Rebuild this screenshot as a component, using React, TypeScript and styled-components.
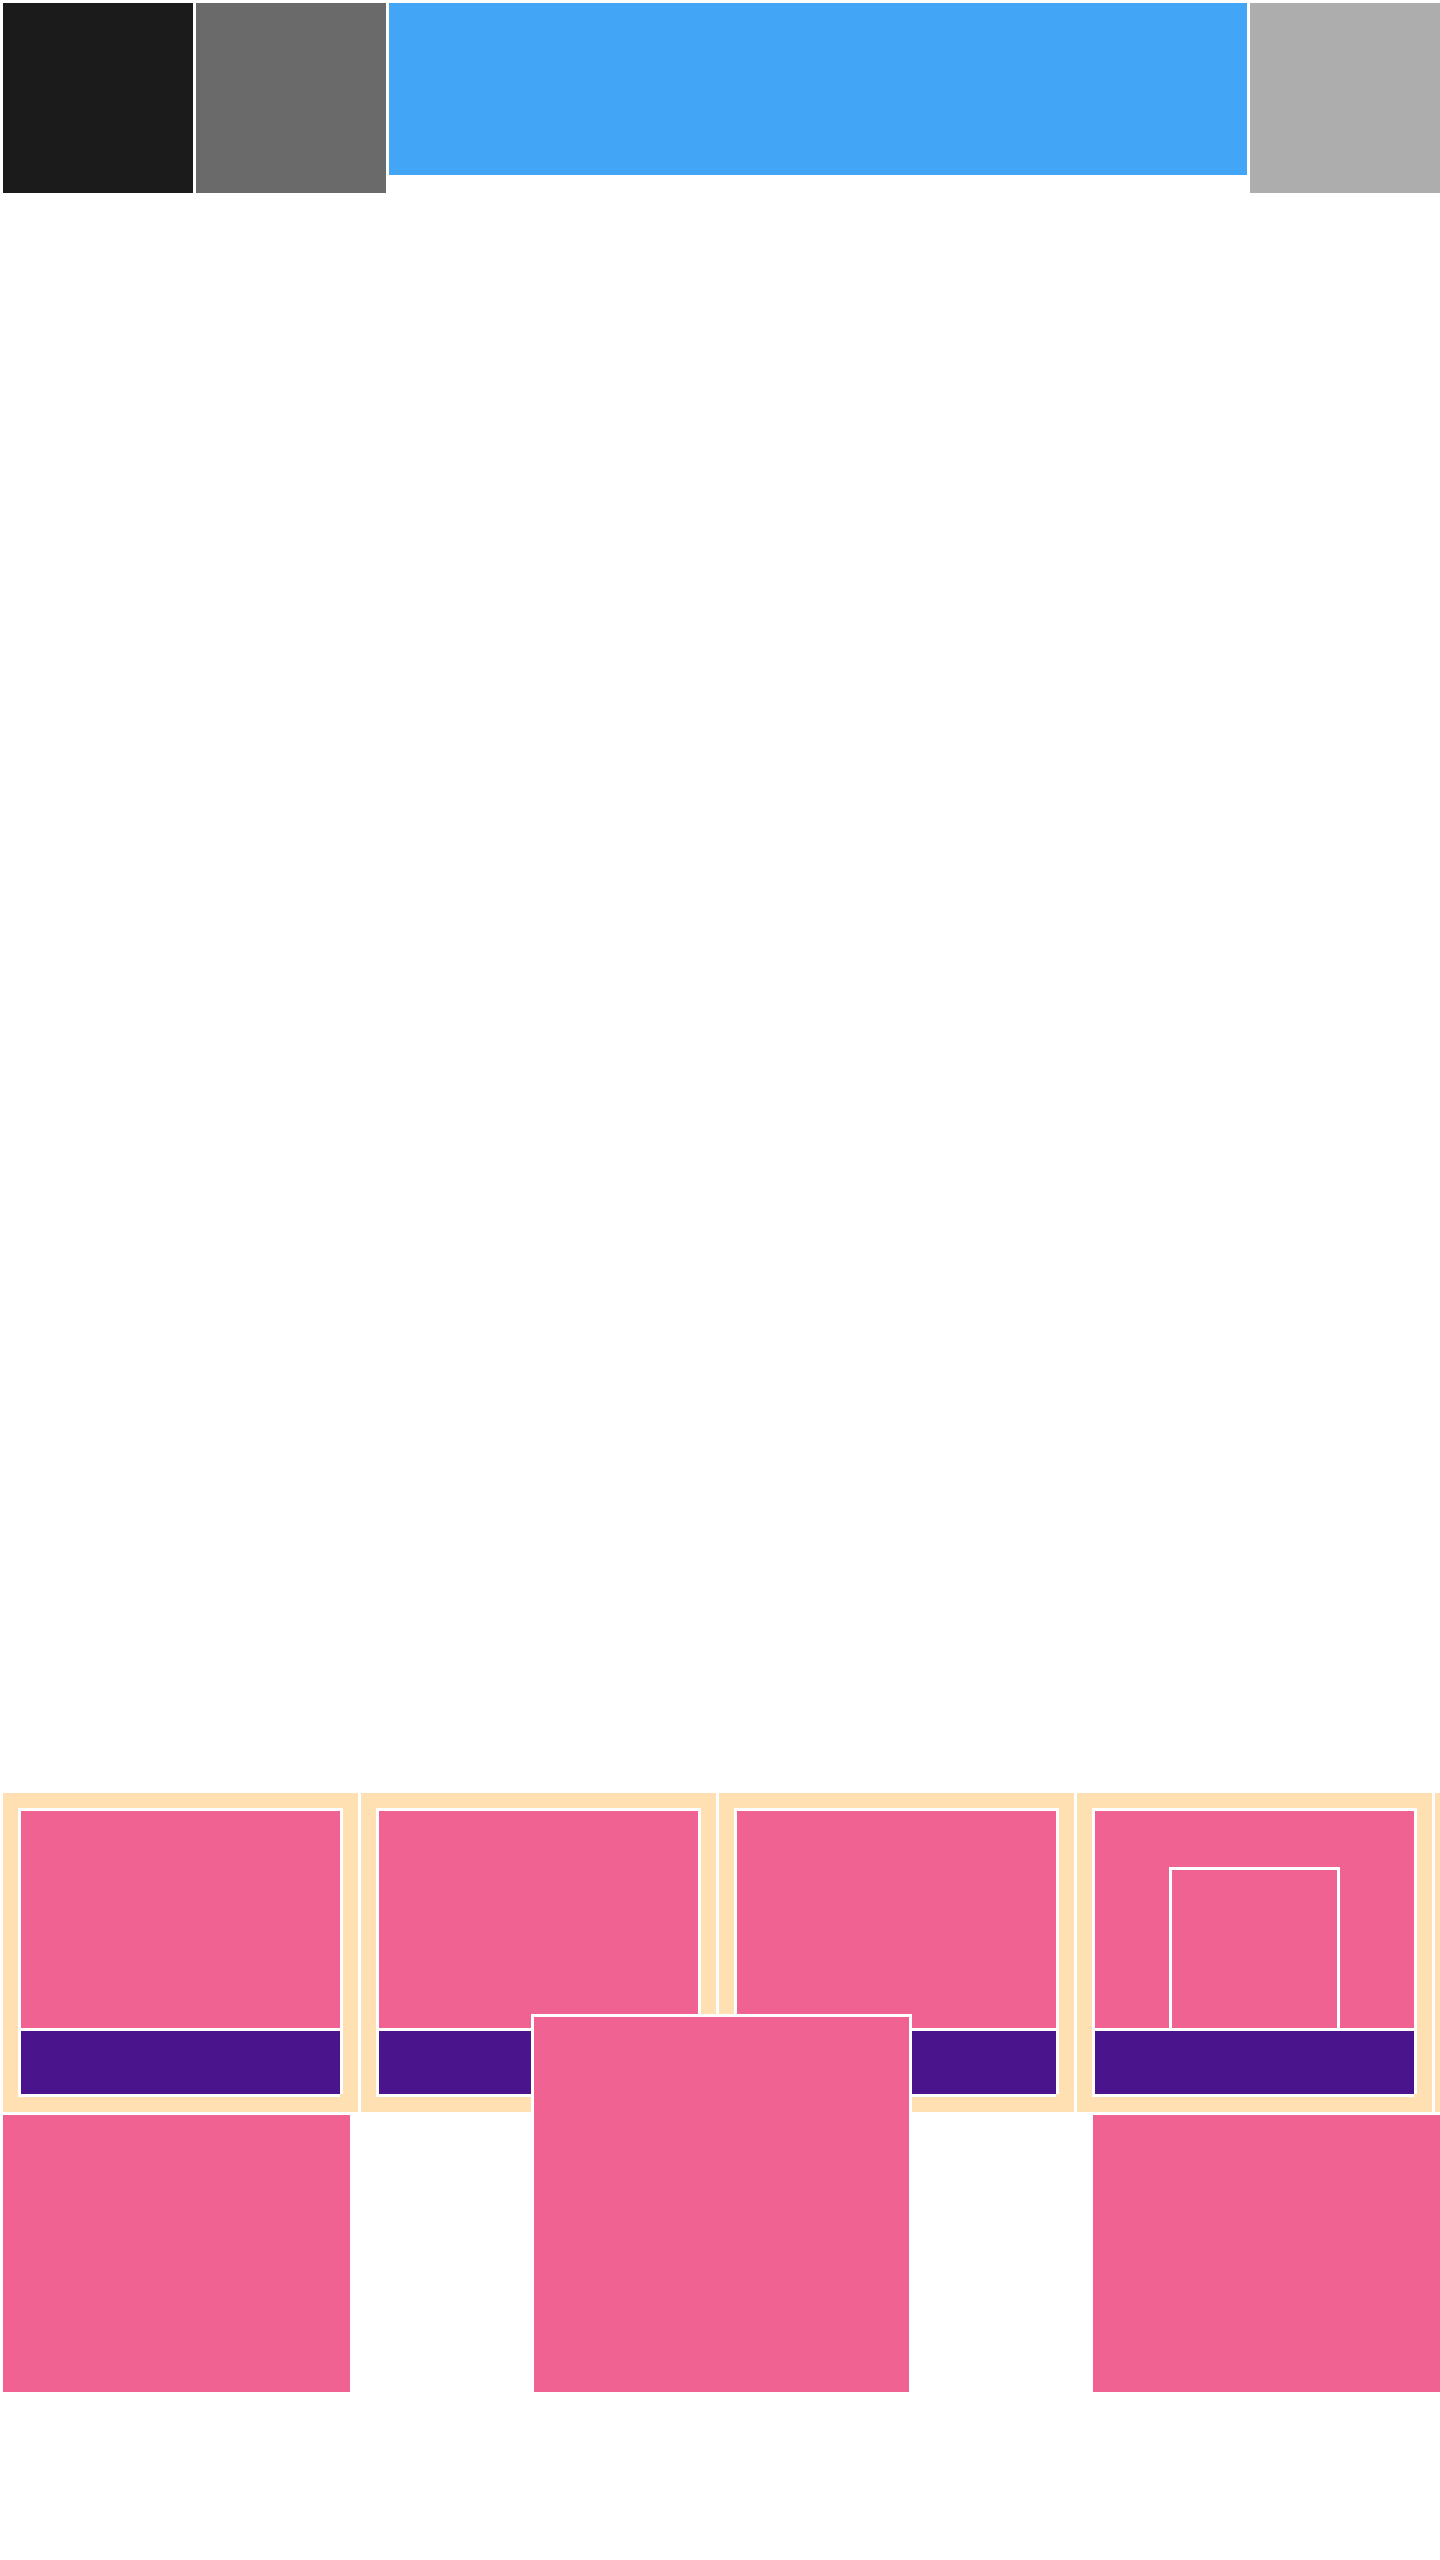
import styled, { createGlobalStyle } from "styled-components";

const GlobalStyle = createGlobalStyle`
  html, body {
    margin: 0;
    padding: 0;
    background: #fff;
    font-family: "Liberation Sans", Arial, sans-serif;
  }
`;

const Page = styled.div`
  width: 1440px;
  display: flex;
  flex-direction: column;
  gap: 3px;
  padding-top: 3px;
  overflow: hidden;
`;

const TopBar = styled.div`
  display: flex;
  align-items: flex-start;
  gap: 3px;
  padding-left: 3px;
`;

const Tile = styled.div<{ color: string }>`
  flex: 0 0 190px;
  height: 190px;
  background: ${({ color }) => color};
`;

const Banner = styled.div`
  flex: 1;
  height: 172px;
  background: #42a5f5;
`;

const Stage = styled.div`
  height: 1594px;
`;

const CardRow = styled.div`
  display: flex;
  gap: 3px;
  padding-left: 3px;
  overflow: hidden;
`;

const Card = styled.div`
  flex: 0 0 355px;
  height: 319px;
  box-sizing: border-box;
  padding: 15px;
  background: #ffe0b2;
`;

const Frame = styled.div`
  width: 325px;
  height: 286px;
  box-sizing: border-box;
  padding: 3px 3px 0 3px;
  background: #fff;
  display: flex;
  flex-direction: column;
  gap: 3px;
`;

const FrameFoot = styled.div`
  width: 322px;
  height: 3px;
  background: #fff;
`;

const Cover = styled.div`
  height: 217px;
  background: #f06292;
  display: flex;
  justify-content: center;
  align-items: flex-end;
`;

const Badge = styled.div`
  width: 171px;
  height: 161px;
  box-sizing: border-box;
  border: 3px solid #fff;
  border-bottom: none;
  background: #f06292;
`;

const Caption = styled.div`
  height: 63px;
  background: #4a148c;
`;

const BottomRow = styled.div`
  display: flex;
  justify-content: space-between;
  align-items: flex-start;
  padding-left: 3px;
`;

const Panel = styled.div`
  flex: 0 0 347px;
  height: 277px;
  background: #f06292;
`;

const Feature = styled.div`
  position: relative;
  flex: 0 0 381px;
  height: 381px;
  margin-top: -101px;
  box-sizing: border-box;
  border: 3px solid #fff;
  background: #f06292;
`;

function CardItem({ withBadge }: { withBadge?: boolean }) {
  return (
    <Card>
      <Frame>
        <Cover>{withBadge && <Badge />}</Cover>
        <Caption />
      </Frame>
      <FrameFoot />
    </Card>
  );
}

export default function App() {
  return (
    <>
      <GlobalStyle />
      <Page>
        <TopBar>
          <Tile color="#1b1b1b" />
          <Tile color="#6a6a6a" />
          <Banner />
          <Tile color="#adadad" />
        </TopBar>
        <Stage />
        <CardRow>
          <CardItem />
          <CardItem />
          <CardItem />
          <CardItem withBadge />
          <CardItem />
        </CardRow>
        <BottomRow>
          <Panel />
          <Feature />
          <Panel />
        </BottomRow>
      </Page>
    </>
  );
}
